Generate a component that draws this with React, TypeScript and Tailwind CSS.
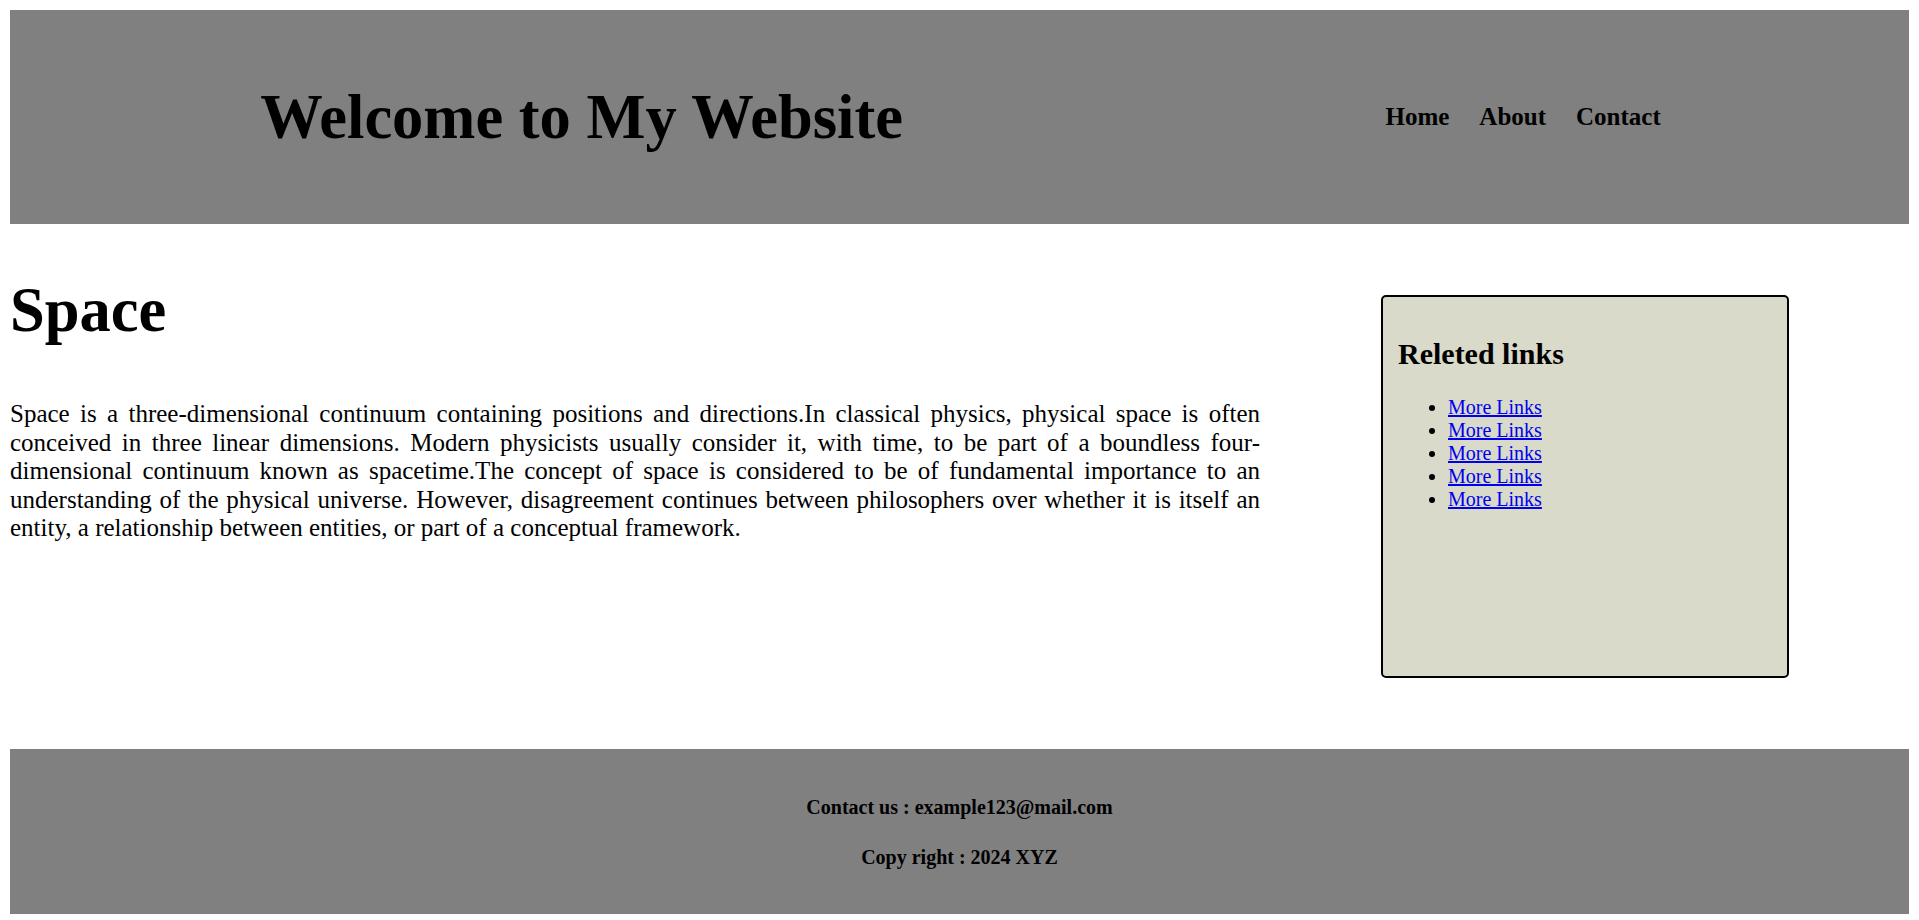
import React from 'react';

const navItems = ['Home', 'About', 'Contact'];
const links = Array.from({ length: 5 });

const App: React.FC = () => {
  return (
    <div className="p-[10px] pb-[7px] bg-white text-black font-['Liberation_Serif','Times_New_Roman',serif]">
      <header className="bg-[#808080] h-[214px] flex items-center justify-around">
        <h1 className="ml-[9px] text-[62.5px] leading-[72px] font-bold">Welcome to My Website</h1>
        <nav className="mr-[7px] flex gap-[30px] text-[25px] font-bold">
          {navItems.map((item) => (
            <span key={item}>{item}</span>
          ))}
        </nav>
      </header>

      <main className="flex items-start">
        <article className="w-[1250px]">
          <h1 className="mt-[50px] text-[62.5px] leading-[72px] font-bold">Space</h1>
          <p className="mt-[54px] text-[25px] leading-[28.5px] text-justify">
            Space is a three-dimensional continuum containing positions and directions.In classical physics, physical
            space is often conceived in three linear dimensions. Modern physicists usually consider it, with time, to be
            part of a boundless four-dimensional continuum known as spacetime.The concept of space is considered to be
            of fundamental importance to an understanding of the physical universe. However, disagreement continues
            between philosophers over whether it is itself an entity, a relationship between entities, or part of a
            conceptual framework.
          </p>
        </article>

        <aside className="ml-[121px] my-[71px] w-[408px] h-[383px] bg-[#d9dac9] border-2 border-black rounded-[5px] px-[15px]">
          <h2 className="mt-[40px] text-[30px] leading-[34px] font-bold">Releted links</h2>
          <ul className="mt-[25px] pl-[50px] list-disc text-[20px] leading-[23px]">
            {links.map((_, i) => (
              <li key={i}>
                <a href="#" className="text-[#0000ee] underline">More Links</a>
              </li>
            ))}
          </ul>
        </aside>
      </main>

      <footer className="bg-[#808080] pt-[20px] pb-[18px] text-center">
        <h4 className="my-[27px] text-[20px] leading-[23px] font-bold">Contact us : example123@mail.com</h4>
        <h4 className="my-[27px] text-[20px] leading-[23px] font-bold">Copy right : 2024 XYZ</h4>
      </footer>
    </div>
  );
};

export default App;
